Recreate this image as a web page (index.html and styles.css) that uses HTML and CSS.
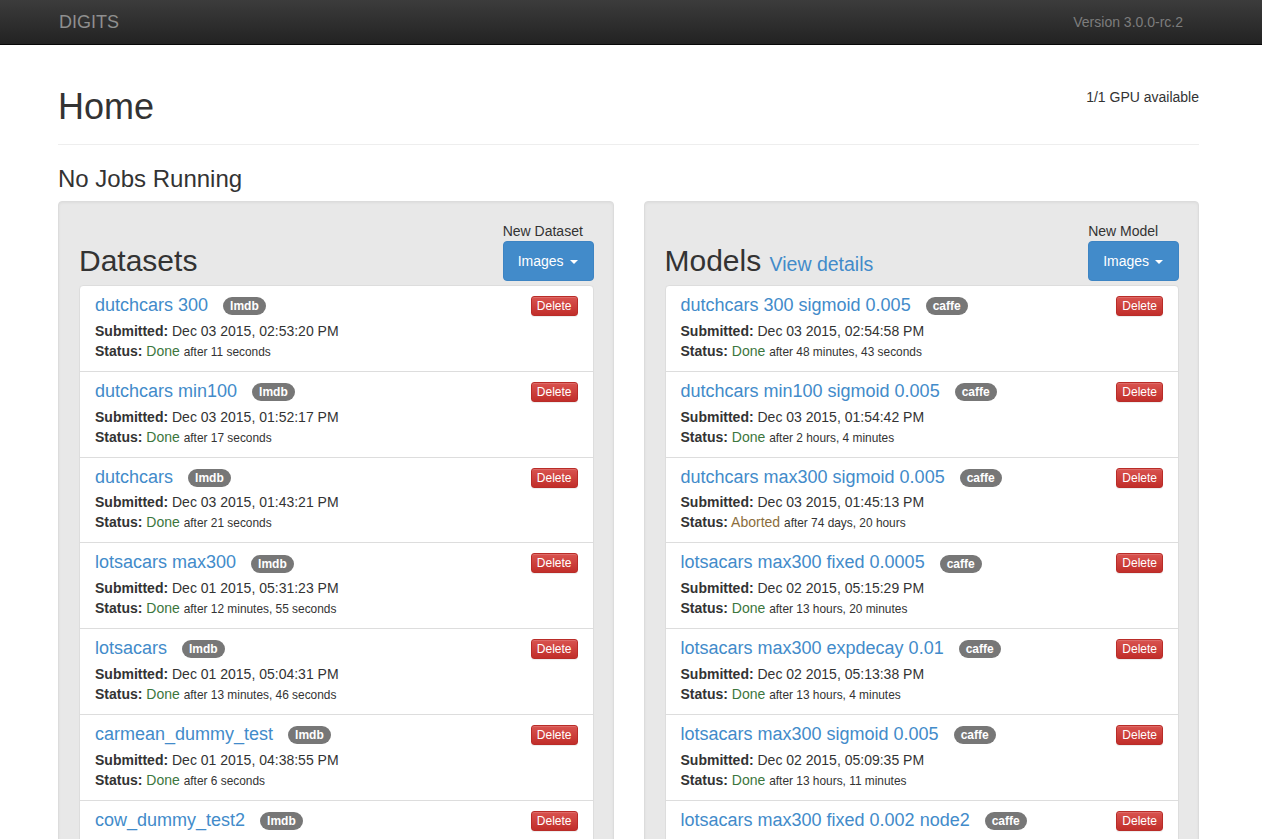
FILE: index.html
```html
<!DOCTYPE html>
<html>
<head>
<meta charset="utf-8">
<title>DIGITS</title>
<link rel="stylesheet" href="styles.css">
</head>
<body>
<nav class="navbar">
  <div class="navbar-inner">
    <a class="brand">DIGITS</a>
    <span class="version">Version 3.0.0-rc.2</span>
  </div>
</nav>
<main class="container">
  <div class="page-header">
    <h1>Home</h1>
    <div class="gpu">1/1 GPU available</div>
  </div>
  <h3 class="jobs">No Jobs Running</h3>
  <div class="columns">
    <section class="well">
      <div class="well-head">
        <h2>Datasets</h2>
        <div class="new-group">
          <div class="new-label">New Dataset</div>
          <a class="btn-primary">Images <span class="caret"></span></a>
        </div>
      </div>
      <div class="list-group">
        <div class="item">
          <a class="btn-delete">Delete</a>
          <h4><a class="name">dutchcars 300</a><span class="badge">lmdb</span></h4>
          <div class="line"><b>Submitted:</b> Dec 03 2015, 02:53:20 PM</div>
          <div class="line"><b>Status:</b> <span class="done">Done</span> <small>after 11 seconds</small></div>
        </div>
        <div class="item">
          <a class="btn-delete">Delete</a>
          <h4><a class="name">dutchcars min100</a><span class="badge">lmdb</span></h4>
          <div class="line"><b>Submitted:</b> Dec 03 2015, 01:52:17 PM</div>
          <div class="line"><b>Status:</b> <span class="done">Done</span> <small>after 17 seconds</small></div>
        </div>
        <div class="item">
          <a class="btn-delete">Delete</a>
          <h4><a class="name">dutchcars</a><span class="badge">lmdb</span></h4>
          <div class="line"><b>Submitted:</b> Dec 03 2015, 01:43:21 PM</div>
          <div class="line"><b>Status:</b> <span class="done">Done</span> <small>after 21 seconds</small></div>
        </div>
        <div class="item">
          <a class="btn-delete">Delete</a>
          <h4><a class="name">lotsacars max300</a><span class="badge">lmdb</span></h4>
          <div class="line"><b>Submitted:</b> Dec 01 2015, 05:31:23 PM</div>
          <div class="line"><b>Status:</b> <span class="done">Done</span> <small>after 12 minutes, 55 seconds</small></div>
        </div>
        <div class="item">
          <a class="btn-delete">Delete</a>
          <h4><a class="name">lotsacars</a><span class="badge">lmdb</span></h4>
          <div class="line"><b>Submitted:</b> Dec 01 2015, 05:04:31 PM</div>
          <div class="line"><b>Status:</b> <span class="done">Done</span> <small>after 13 minutes, 46 seconds</small></div>
        </div>
        <div class="item">
          <a class="btn-delete">Delete</a>
          <h4><a class="name">carmean_dummy_test</a><span class="badge">lmdb</span></h4>
          <div class="line"><b>Submitted:</b> Dec 01 2015, 04:38:55 PM</div>
          <div class="line"><b>Status:</b> <span class="done">Done</span> <small>after 6 seconds</small></div>
        </div>
        <div class="item">
          <a class="btn-delete">Delete</a>
          <h4><a class="name">cow_dummy_test2</a><span class="badge">lmdb</span></h4>
          <div class="line"><b>Submitted:</b> Dec 01 2015, 04:30:12 PM</div>
          <div class="line"><b>Status:</b> <span class="done">Done</span> <small>after 5 seconds</small></div>
        </div>
      </div>
    </section>
    <section class="well">
      <div class="well-head">
        <h2>Models <small><a class="details">View details</a></small></h2>
        <div class="new-group">
          <div class="new-label">New Model</div>
          <a class="btn-primary">Images <span class="caret"></span></a>
        </div>
      </div>
      <div class="list-group">
        <div class="item">
          <a class="btn-delete">Delete</a>
          <h4><a class="name">dutchcars 300 sigmoid 0.005</a><span class="badge">caffe</span></h4>
          <div class="line"><b>Submitted:</b> Dec 03 2015, 02:54:58 PM</div>
          <div class="line"><b>Status:</b> <span class="done">Done</span> <small>after 48 minutes, 43 seconds</small></div>
        </div>
        <div class="item">
          <a class="btn-delete">Delete</a>
          <h4><a class="name">dutchcars min100 sigmoid 0.005</a><span class="badge">caffe</span></h4>
          <div class="line"><b>Submitted:</b> Dec 03 2015, 01:54:42 PM</div>
          <div class="line"><b>Status:</b> <span class="done">Done</span> <small>after 2 hours, 4 minutes</small></div>
        </div>
        <div class="item">
          <a class="btn-delete">Delete</a>
          <h4><a class="name">dutchcars max300 sigmoid 0.005</a><span class="badge">caffe</span></h4>
          <div class="line"><b>Submitted:</b> Dec 03 2015, 01:45:13 PM</div>
          <div class="line"><b>Status:</b> <span class="aborted">Aborted</span> <small>after 74 days, 20 hours</small></div>
        </div>
        <div class="item">
          <a class="btn-delete">Delete</a>
          <h4><a class="name">lotsacars max300 fixed 0.0005</a><span class="badge">caffe</span></h4>
          <div class="line"><b>Submitted:</b> Dec 02 2015, 05:15:29 PM</div>
          <div class="line"><b>Status:</b> <span class="done">Done</span> <small>after 13 hours, 20 minutes</small></div>
        </div>
        <div class="item">
          <a class="btn-delete">Delete</a>
          <h4><a class="name">lotsacars max300 expdecay 0.01</a><span class="badge">caffe</span></h4>
          <div class="line"><b>Submitted:</b> Dec 02 2015, 05:13:38 PM</div>
          <div class="line"><b>Status:</b> <span class="done">Done</span> <small>after 13 hours, 4 minutes</small></div>
        </div>
        <div class="item">
          <a class="btn-delete">Delete</a>
          <h4><a class="name">lotsacars max300 sigmoid 0.005</a><span class="badge">caffe</span></h4>
          <div class="line"><b>Submitted:</b> Dec 02 2015, 05:09:35 PM</div>
          <div class="line"><b>Status:</b> <span class="done">Done</span> <small>after 13 hours, 11 minutes</small></div>
        </div>
        <div class="item">
          <a class="btn-delete">Delete</a>
          <h4><a class="name">lotsacars max300 fixed 0.002 node2</a><span class="badge">caffe</span></h4>
          <div class="line"><b>Submitted:</b> Dec 02 2015, 04:58:02 PM</div>
          <div class="line"><b>Status:</b> <span class="done">Done</span> <small>after 13 hours, 2 minutes</small></div>
        </div>
      </div>
    </section>
  </div>
</main>
</body>
</html>
```
FILE: styles.css
```css
html, body {
  margin: 0;
  padding: 0;
  height: 100%;
  overflow: hidden;
}
body {
  font-family: "Liberation Sans", Arial, sans-serif;
  font-size: 14px;
  line-height: 20px;
  color: #333;
  background: #fff;
}
a { color: #428bca; text-decoration: none; }

.navbar {
  height: 44px;
  border-bottom: 1px solid #080808;
  background: linear-gradient(to bottom, #3c3c3c 0%, #222 100%);
}
.navbar-inner {
  width: 1141px;
  margin-left: 58px;
  height: 44px;
  display: flex;
  align-items: center;
  justify-content: space-between;
}
.brand {
  color: #8f8f8f;
  font-size: 18px;
  line-height: 20px;
  padding-left: 1px;
  margin-top: -1px;
}
.version {
  color: #7d7d7d;
  font-size: 14px;
  margin-right: 16px;
  margin-top: -1px;
}

.container {
  width: 1141px;
  margin-left: 58px;
}
.page-header {
  display: flex;
  justify-content: space-between;
  align-items: flex-start;
  margin-top: 42px;
  padding-bottom: 9px;
  border-bottom: 1px solid #eee;
}
.page-header h1 {
  margin: 0 0 8px 0;
  font-size: 36px;
  font-weight: 500;
  line-height: 1.1;
}
.gpu {
  margin-top: 0;
  line-height: 20px;
}
.jobs {
  font-size: 24px;
  font-weight: 500;
  line-height: 1.1;
  margin: 21px 0 9px 0;
}

.columns {
  display: flex;
  gap: 30px;
}
.well {
  flex: 1 1 0;
  background: #e8e8e8;
  border: 1px solid #dcdcdc;
  border-radius: 4px;
  padding: 19px 19px 19px 20px;
  box-shadow: inset 0 1px 3px rgba(0,0,0,.05), 0 1px 0 rgba(255,255,255,.1);
  min-height: 800px;
}
.well-head {
  display: flex;
  justify-content: space-between;
  align-items: flex-end;
  margin-bottom: 4px;
}
.well-head h2 {
  margin: 0 0 4px 0;
  font-size: 30px;
  font-weight: 500;
  line-height: 1.1;
}
.well-head h2 small {
  font-size: 65%;
  font-weight: 400;
}
.new-group {
  display: flex;
  flex-direction: column;
  align-items: flex-start;
}
.new-label {
  line-height: 20px;
}
.btn-primary {
  display: inline-block;
  color: #fff;
  background: #428bca;
  border: 1px solid #3d84c3;
  border-radius: 4px;
  padding: 9px 15px 9px 14px;
  line-height: 20px;
  font-size: 14px;
}
.caret {
  display: inline-block;
  width: 0;
  height: 0;
  margin-left: 2px;
  vertical-align: middle;
  border-top: 4px solid #fff;
  border-left: 4px solid transparent;
  border-right: 4px solid transparent;
}

.list-group {
  background: #fff;
  border: 1px solid #ddd;
  border-radius: 4px;
}
.item {
  padding: 10px 15px;
  border-bottom: 1px solid #ddd;
}
.item h4 {
  margin: 0 0 5px 0;
  height: 19.8px;
  font-size: 18px;
  font-weight: 500;
  line-height: 1.1;
}
.badge {
  display: inline-block;
  margin-left: 15px;
  padding: 3px 7px;
  font-size: 12px;
  font-weight: 700;
  line-height: 1;
  color: #fff;
  background: #777;
  border-radius: 10px;
  vertical-align: middle;
}
.btn-delete {
  float: right;
  color: #fff;
  font-size: 12px;
  line-height: 18px;
  padding: 0 5px;
  border: 1px solid #b92c28;
  border-radius: 3px;
  background: linear-gradient(to bottom, #d9534f 0%, #c12e2a 100%);
  box-shadow: inset 0 1px 0 rgba(255,255,255,.15), 0 1px 1px rgba(0,0,0,.075);
}
.line {
  height: 20px;
  line-height: 20px;
}
.line small {
  font-size: 85%;
  line-height: 1;
}
.done { color: #3c763d; }
.aborted { color: #8a6d3b; }
```
